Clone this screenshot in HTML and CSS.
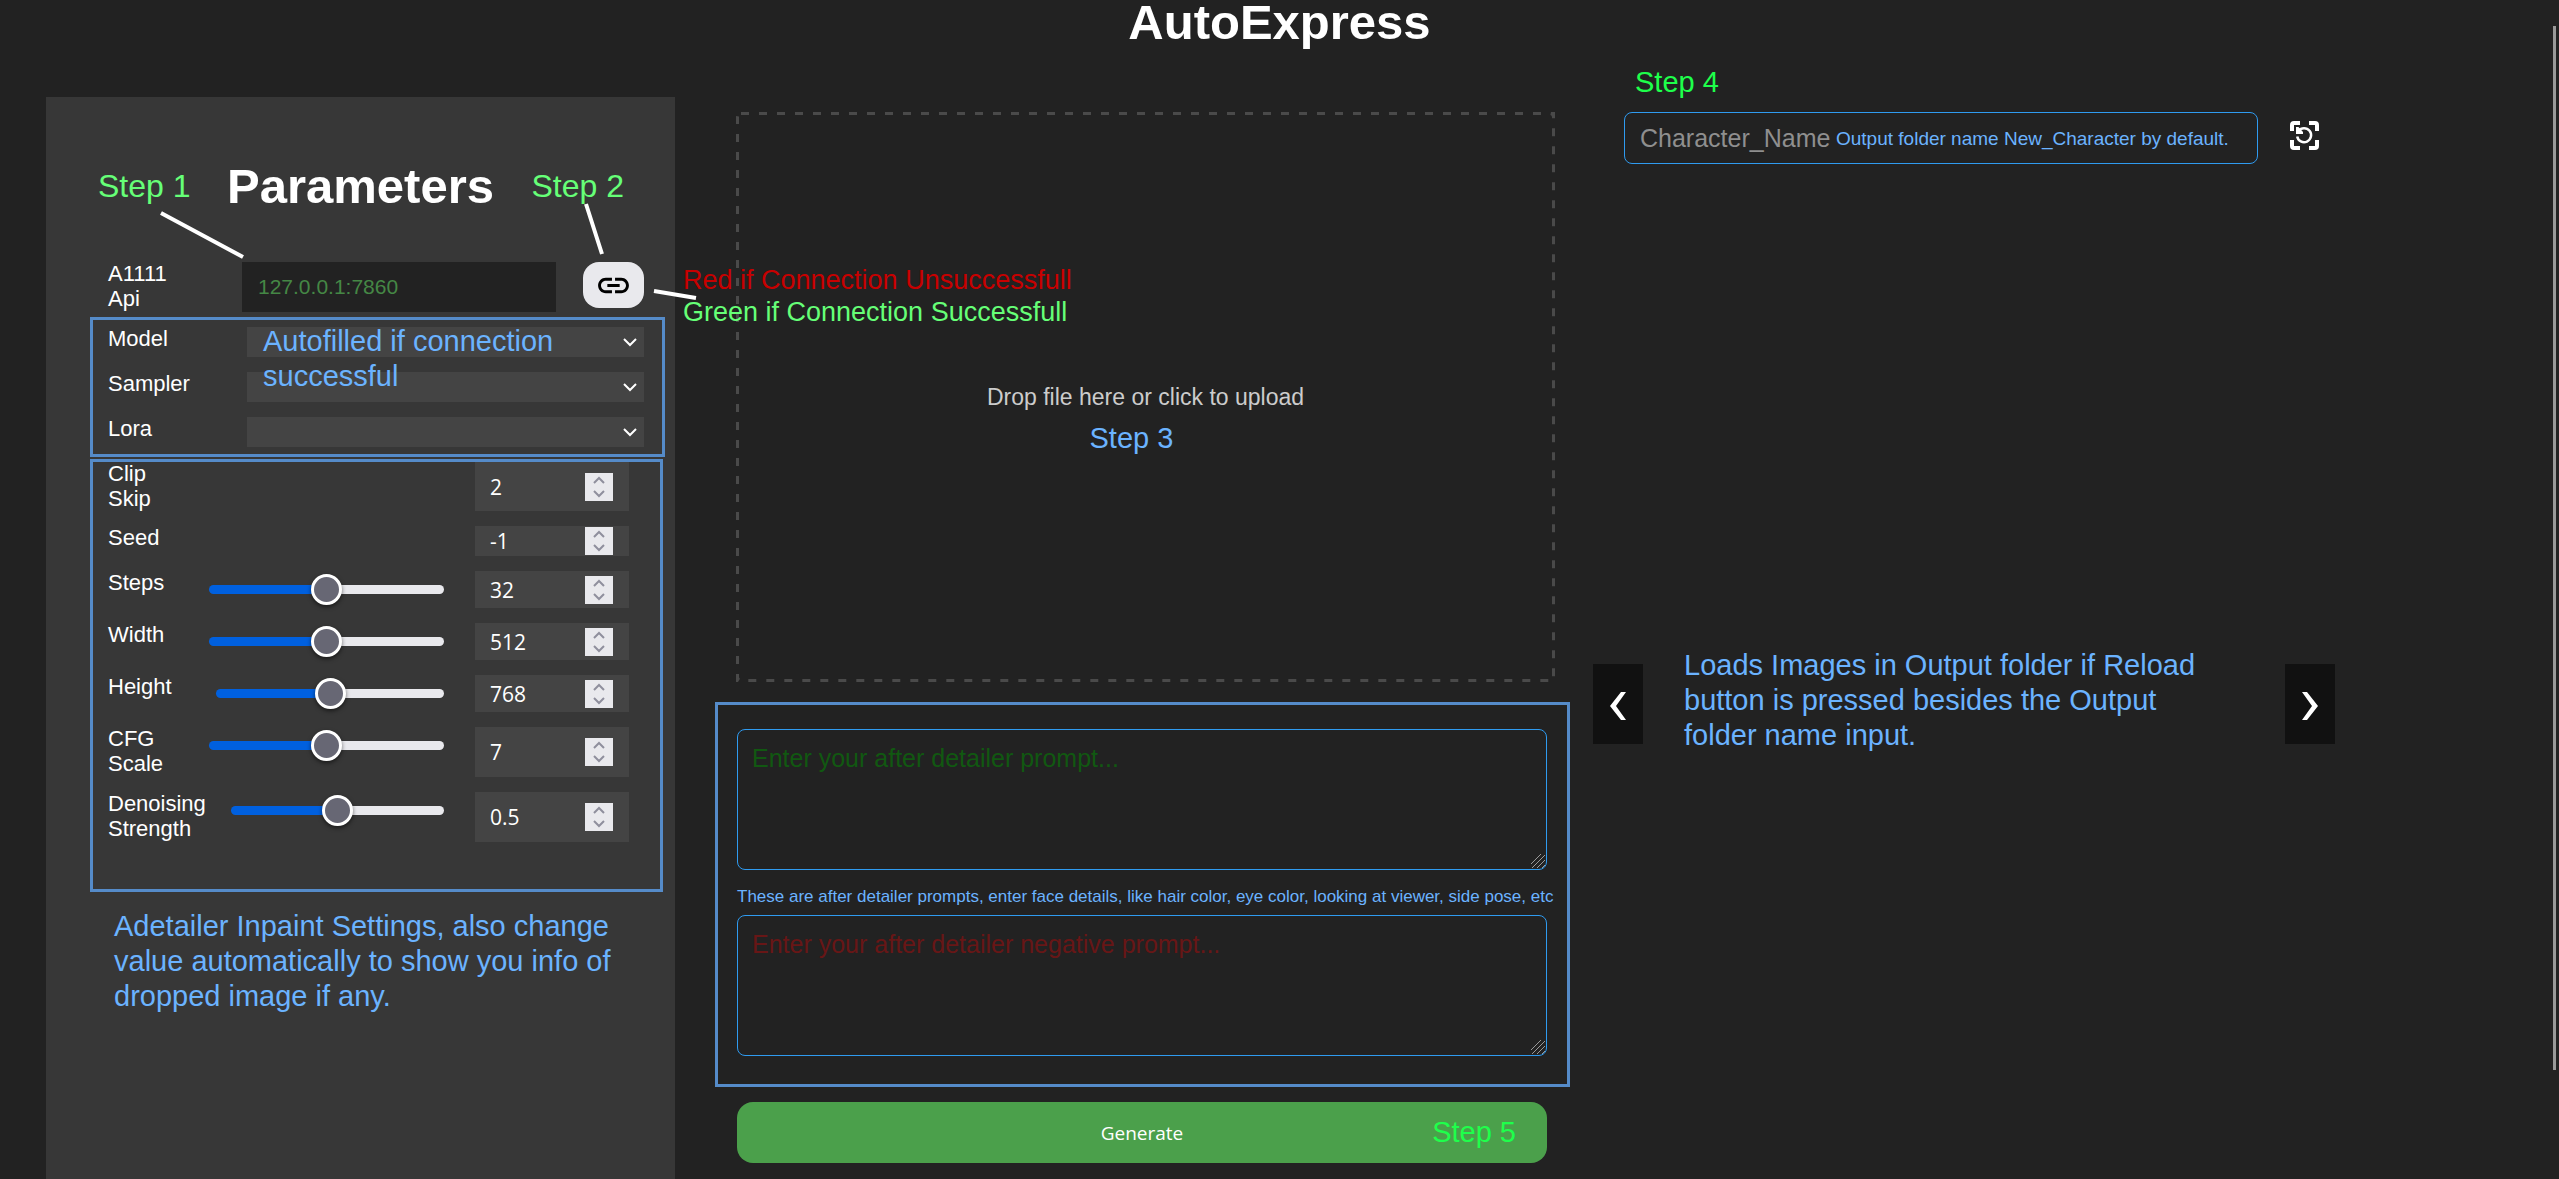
FILE: index.html
```html
<!DOCTYPE html>
<html lang="en">
<head>
<meta charset="utf-8">
<title>AutoExpress</title>
<link rel="stylesheet" href="styles.css">
</head>
<body>
<h1 class="title">AutoExpress</h1>
<main class="layout">
  <section class="panel">
    <h2 class="panel-title">Parameters</h2>
    <div class="api-row">
      <label class="label" for="api">A1111<br>Api</label>
      <input class="api-input" id="api" type="text" placeholder="127.0.0.1:7860">
      <button class="link-button" type="button" aria-label="Connect">
        <svg viewBox="0 0 24 24" width="37" height="37"><path d="M3.9 12c0-1.71 1.39-3.1 3.1-3.1h4V7H7c-2.76 0-5 2.24-5 5s2.24 5 5 5h4v-1.9H7c-1.71 0-3.1-1.39-3.1-3.1zM8 13h8v-2H8v2zm9-6h-4v1.9h4c1.71 0 3.1 1.39 3.1 3.1s-1.39 3.1-3.1 3.1h-4V17h4c2.76 0 5-2.24 5-5s-2.24-5-5-5z"/></svg>
      </button>
    </div>

    <div class="group group-models">
      <div class="row">
        <label class="label" for="model">Model</label>
        <select class="select" id="model"></select>
      </div>
      <div class="row">
        <label class="label" for="sampler">Sampler</label>
        <select class="select" id="sampler"></select>
      </div>
      <div class="row">
        <label class="label" for="lora">Lora</label>
        <select class="select" id="lora"></select>
      </div>
      <p class="note note-autofill">Autofilled if connection successful</p>
    </div>

    <div class="group group-settings">
      <div class="row row-first">
        <label class="label" for="clip">Clip<br>Skip</label>
        <input class="number" id="clip" type="number" value="2">
      </div>
      <div class="row">
        <label class="label" for="seed">Seed</label>
        <input class="number" id="seed" type="number" value="-1">
      </div>
      <div class="row row-slider">
        <label class="label" for="steps">Steps</label>
        <input class="slider" type="range" min="0" max="64" value="32" aria-label="Steps slider">
        <input class="number" id="steps" type="number" value="32">
      </div>
      <div class="row row-slider">
        <label class="label" for="width">Width</label>
        <input class="slider" type="range" min="0" max="1024" value="512" aria-label="Width slider">
        <input class="number" id="width" type="number" value="512">
      </div>
      <div class="row row-slider">
        <label class="label label-medium" for="height">Height</label>
        <input class="slider" type="range" min="0" max="1536" value="768" aria-label="Height slider">
        <input class="number" id="height" type="number" value="768">
      </div>
      <div class="row row-double">
        <label class="label" for="cfg">CFG<br>Scale</label>
        <input class="slider" type="range" min="0" max="14" value="7" aria-label="CFG scale slider">
        <input class="number" id="cfg" type="number" value="7">
      </div>
      <div class="row row-double">
        <label class="label label-long" for="denoise">Denoising<br>Strength</label>
        <input class="slider" type="range" min="0" max="1" step="0.01" value="0.5" aria-label="Denoising slider">
        <input class="number" id="denoise" type="number" step="0.01" value="0.5">
      </div>
    </div>
    <p class="note note-settings">Adetailer Inpaint Settings, also change value automatically to show you info of dropped image if any.</p>

    <svg class="pointers" width="660" height="220" aria-hidden="true">
      <path d="M115 116L197 160M540 107L556 157M608 194L650 201" stroke="#fff" stroke-width="4" fill="none"/>
    </svg>
    <span class="step step-1">Step 1</span>
    <span class="step step-2">Step 2</span>
    <p class="connection"><span class="bad">Red if Connection Unsuccessfull</span><br><span class="good">Green if Connection Successfull</span></p>
  </section>

  <section class="workspace">
    <button class="dropzone" type="button">
      <svg class="dash" aria-hidden="true"><rect width="100%" height="100%" rx="5"/></svg>
      Drop file here or click to upload
      <span class="note step-3">Step 3</span>
    </button>
    <div class="prompts">
      <textarea class="prompt prompt-positive" placeholder="Enter your after detailer prompt..." aria-label="Prompt"></textarea>
      <p class="hint">These are after detailer prompts, enter face details, like hair color, eye color, looking at viewer, side pose, etc</p>
      <textarea class="prompt prompt-negative" placeholder="Enter your after detailer negative prompt..." aria-label="Negative prompt"></textarea>
    </div>
    <button class="generate" type="button">Generate<span class="step-bright step-5">Step 5</span></button>
  </section>

  <section class="output">
    <div class="output-row">
      <span class="step-bright step-4">Step 4</span>
      <div class="folder">
        <input class="folder-input" type="text" placeholder="Character_Name" aria-label="Output folder name">
        <span class="folder-note">Output folder name New_Character by default.</span>
      </div>
      <button class="reload" type="button" aria-label="Reload">
        <svg viewBox="0 0 29 29" width="29" height="29" fill="none" stroke="#fff">
          <path stroke-width="4" d="M2 10V4a2 2 0 0 1 2-2h6M19 2h6a2 2 0 0 1 2 2v6M27 19v6a2 2 0 0 1-2 2h-6M10 27H4a2 2 0 0 1-2-2v-6"/>
          <path stroke-width="2.500" d="M8.500 10A7 7 0 1 1 7.200 15.500"/>
          <path fill="#fff" stroke="none" d="M6 6v7h7v-2L8.500 6z"/>
        </svg>
      </button>
    </div>
    <div class="carousel">
      <button class="arrow" type="button" aria-label="Previous">
        <svg viewBox="0 0 16 28" width="16" height="28"><path fill="#fff" d="M11 0h5L6 14l10 14h-5L0 14z"/></svg>
      </button>
      <p class="note note-carousel">Loads Images in Output folder if Reload button is pressed besides the Output folder name input.</p>
      <button class="arrow" type="button" aria-label="Next">
        <svg viewBox="0 0 16 28" width="16" height="28"><path fill="#fff" d="M5 0H0l10 14L0 28h5l11-14z"/></svg>
      </button>
    </div>
  </section>
</main>
<div class="scroll-thumb"></div>
</body>
</html>
```
FILE: styles.css
```css
* {
  box-sizing: border-box;
}

body {
  margin: 0;
  min-height: 100vh;
  display: flex;
  flex-direction: column;
  background: #222;
  color: #fff;
  font-family: "Liberation Sans", Arial, sans-serif;
}

p,
h1,
h2 {
  margin: 0;
}

button,
input,
select,
textarea {
  margin: 0;
  border: 0;
  font-family: inherit;
}

.title {
  margin-bottom: 53px;
  font-size: 49px;
  line-height: 44px;
  text-align: center;
}

.layout {
  flex: 1;
  display: grid;
  grid-template-columns: minmax(0, 629fr) minmax(0, 872fr) minmax(0, 742fr);
  column-gap: 23px;
  padding: 0 224px 0 46px;
}

/* Annotations */

.note {
  color: #6bb3ff;
  font-size: 29px;
  line-height: 35px;
}

.step,
.step-bright {
  position: absolute;
  white-space: nowrap;
}

.step {
  top: 70px;
  color: #6f7;
  font-size: 32px;
  line-height: 38px;
}

.step-1 {
  left: 52px;
}

.step-2 {
  right: 51px;
}

.step-bright {
  color: #1eff4b;
  font-size: 29px;
  line-height: 35px;
}

/* Parameters panel */

.panel {
  position: relative;
  z-index: 1;
  padding-top: 61px;
  background: #373737;
}

.panel-title {
  margin-bottom: 48px;
  font-size: 49px;
  line-height: 56px;
  text-align: center;
}

.label {
  flex: 0 0 101px;
  margin-top: -1px;
  font-size: 22px;
  line-height: 25px;
}

.label-medium {
  flex-basis: 108px;
}

.label-long {
  flex-basis: 123px;
}

.api-row {
  display: flex;
  align-items: flex-start;
  height: 50px;
  margin: 0 31px 5px 62px;
}

.api-row .label {
  flex-basis: 134px;
}

.api-input {
  flex: 1;
  min-width: 0;
  height: 50px;
  margin-right: 27px;
  padding: 0 16px;
  background: #222;
  color: #458745;
  font-size: 21px;
}

.api-input::placeholder {
  color: #458745;
}

.link-button {
  display: flex;
  align-items: center;
  justify-content: center;
  width: 61px;
  height: 46px;
  padding: 0;
  border-radius: 16px;
  background: #e9e9ed;
}

.group {
  position: relative;
  display: flex;
  flex-direction: column;
  gap: 15px;
  margin-left: 44px;
  border: 3px solid #558bc9;
}

.group-models {
  margin-right: 10px;
  padding: 7px 18px 7px 15px;
}

.group-settings {
  margin: 2px 12px 0 44px;
  padding: 0 31px 47px 15px;
}

.row {
  display: flex;
  align-items: flex-start;
  height: 30px;
}

.row-first {
  height: 49px;
}

.row-slider {
  height: 37px;
}

.row-double {
  height: 50px;
}

.group-models .label {
  flex-basis: 139px;
}

.select {
  flex: 1;
  min-width: 0;
  height: 30px;
  appearance: none;
  background: #444 url("data:image/svg+xml,%3Csvg xmlns='http://www.w3.org/2000/svg' width='14' height='9' fill='none' stroke='%23fff' stroke-width='2'%3E%3Cpath d='M1 1l6 6 6-6'/%3E%3C/svg%3E") no-repeat right 7px center;
  color: #fff;
  font-size: 22px;
}

.note-autofill {
  position: absolute;
  top: 4px;
  left: 170px;
  width: 320px;
}

.number {
  flex: none;
  width: 154px;
  min-width: 0;
  height: 100%;
  margin-left: auto;
  padding: 0 16px 0 15px;
  background: #444;
  color: #fff;
  font-family: "Open Sans", sans-serif;
  font-size: 21px;
}

.number::-webkit-inner-spin-button {
  appearance: none;
  width: 28px;
  height: 28px;
  margin: 0;
  opacity: 1;
  background: #e9e9ed url("data:image/svg+xml,%3Csvg xmlns='http://www.w3.org/2000/svg' width='28' height='28' fill='none' stroke='%238f8f9d' stroke-width='2'%3E%3Cpath d='M9 10l5-5 5 5M9 18l5 5 5-5'/%3E%3C/svg%3E") no-repeat center;
}

.slider {
  flex: 1;
  min-width: 0;
  height: 37px;
  margin-right: 31px;
  appearance: none;
  background: none;
}

.slider::-webkit-slider-runnable-track {
  height: 9px;
  border-radius: 5px;
  background: linear-gradient(90deg, #0060df 50%, #e9e9ed 50%);
}

.slider::-webkit-slider-thumb {
  appearance: none;
  width: 31px;
  height: 31px;
  margin-top: -11px;
  border: 3px solid #fff;
  border-radius: 50%;
  background: #676774;
  box-shadow: 0 2px 4px #0008;
}

.note-settings {
  margin: 17px 48px 0 68px;
}

.pointers {
  position: absolute;
  top: 0;
  left: 0;
}

.connection {
  position: absolute;
  top: 167px;
  left: calc(100% + 8px);
  font-size: 27px;
  line-height: 32px;
  white-space: nowrap;
}

.bad {
  color: #c80000;
}

.good {
  color: #6f7;
}

/* Upload and prompts */

.workspace {
  padding-left: 17px;
  display: flex;
  flex-direction: column;
}

.dropzone {
  position: relative;
  height: 570px;
  margin: 15px 15px 20px 21px;
  background: none;
  color: #ccc;
  font-size: 23px;
}

.dash {
  position: absolute;
  top: 0;
  left: 0;
  width: 100%;
  height: 100%;
  fill: none;
  stroke: #4a4a4a;
  stroke-width: 6px;
  stroke-dasharray: 8 10;
}

.step-3 {
  position: absolute;
  top: 309px;
  left: calc(50% - 56px);
}

.prompts {
  padding: 24px 20px 28px 19px;
  border: 3px solid #558bc9;
}

.prompt {
  display: block;
  width: 100%;
  height: 141px;
  padding: 14px;
  border: 1px solid #2f9bf0;
  border-radius: 8px;
  background: #222;
  color: #fff;
  font-size: 25px;
  line-height: 29px;
  resize: vertical;
}

.prompt-positive::placeholder {
  color: #115811;
}

.prompt-negative::placeholder {
  color: #681616;
}

.prompt::-webkit-scrollbar {
  width: 19px;
  height: 19px;
}

.prompt::-webkit-resizer {
  background: url("data:image/svg+xml,%3Csvg xmlns='http://www.w3.org/2000/svg' width='19' height='19' stroke='%23999' stroke-width='1'%3E%3Cpath d='M0 18L18 0M5 18L18 5M10 18l8-8M15 18l3-3'/%3E%3C/svg%3E") no-repeat right bottom;
}

.hint {
  padding: 17px 0 8px;
  color: #6bb3ff;
  font-size: 17px;
  line-height: 20px;
  white-space: nowrap;
}

.generate {
  position: relative;
  height: 61px;
  margin: 15px 23px 16px 22px;
  border-radius: 16px;
  background: #4ba04b;
  color: #fff;
  font-family: "Open Sans", sans-serif;
  font-size: 19px;
}

.step-5 {
  top: 13px;
  right: 31px;
  font-family: "Liberation Sans", Arial, sans-serif;
}

/* Output */

.output-row {
  position: relative;
  display: flex;
  align-items: flex-start;
  gap: 32px;
  margin: 15px 16px 0 31px;
}

.step-4 {
  top: -47px;
  left: 11px;
}

.folder {
  position: relative;
  flex: 1;
}

.folder-input {
  display: block;
  width: 100%;
  height: 52px;
  padding: 0 15px;
  border: 1px solid #2f9bf0;
  border-radius: 8px;
  background: #222;
  color: #fff;
  font-size: 25px;
}

.folder-input::placeholder {
  color: #8f8f8f;
}

.folder-note {
  position: absolute;
  top: 16px;
  left: 212px;
  color: #6bb3ff;
  font-size: 19px;
  line-height: 22px;
  white-space: nowrap;
}

.reload {
  display: flex;
  padding: 9px 0 0;
  background: none;
}

.carousel {
  display: flex;
  align-items: center;
  margin-top: 484px;
}

.arrow {
  display: flex;
  align-items: center;
  justify-content: center;
  flex: 0 0 50px;
  height: 80px;
  padding: 4px 0 0;
  background: #111;
}

.note-carousel {
  flex: 1;
  margin: 0 80px 7px 41px;
}

.scroll-thumb {
  position: fixed;
  top: 26px;
  right: 3px;
  bottom: 109px;
  width: 3px;
  background: #999;
}
```
